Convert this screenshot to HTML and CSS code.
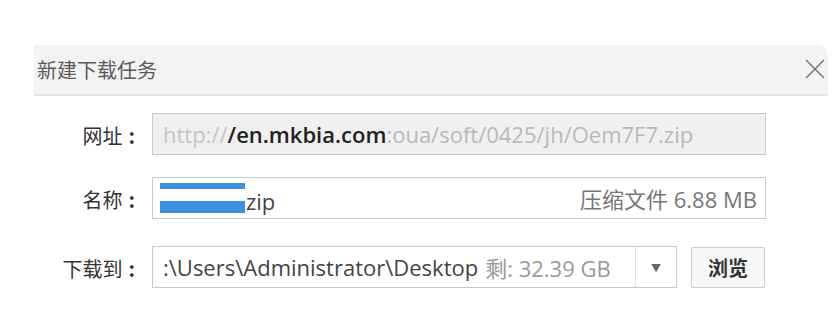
FILE: index.html
```html
<!DOCTYPE html>
<html lang="zh-CN">
<head>
    <meta charset="UTF-8">
    <title>新建下载任务</title>
    <link rel="stylesheet" href="styles.css">
</head>
<body>
    <div class="dialog">
        <div class="titlebar">
            <span class="title">新建下载任务</span>
            <svg class="close" width="22" height="22" viewBox="0 0 22 22">
                <path d="M2 2 L20 20 M20 2 L2 20" stroke="#777" stroke-width="1.5" fill="none"/>
            </svg>
        </div>

        <div class="form">
            <div class="row">
                <label class="label">网址<span class="colon">:</span></label>
                <div class="field field-url">
                    <span class="faint">http://</span><span class="host">/en.mkbia.com</span><span class="faint2">:oua/soft/0425/jh/Oem7F7.zip</span>
                </div>
            </div>

            <div class="row row-name">
                <label class="label">名称<span class="colon">:</span></label>
                <div class="field field-name">
                    <span class="mark"><i class="bar bar-top"></i><i class="bar bar-bottom"></i></span>
                    <span class="name-tail">zip</span>
                    <span class="meta">压缩文件 6.88 MB</span>
                </div>
            </div>

            <div class="row row-path">
                <label class="label">下载到<span class="colon">:</span></label>
                <div class="select">
                    <div class="select-text">:\Users\Administrator\Desktop <span class="free">剩: 32.39 GB</span></div>
                    <div class="select-arrow">&#9660;</div>
                </div>
                <button class="browse">浏览</button>
            </div>
        </div>
    </div>
</body>
</html>
```

FILE: styles.css
```css
* {
    margin: 0;
    padding: 0;
    box-sizing: border-box;
}

body {
    background: #fff;
    font-family: "Open Sans", "Noto Sans CJK SC", sans-serif;
    color: #333;
}

.dialog {
    padding-top: 45px;
    margin-left: 34px;
    width: 794px;
}

/* Barra de titulo */
.titlebar {
    height: 51px;
    background: #f3f3f3;
    border-bottom: 2px solid #e4e4e4;
    border-top-right-radius: 10px;
    display: flex;
    align-items: center;
    justify-content: space-between;
    padding: 0 2px 0 3px;
}

.title {
    font-family: "Noto Sans CJK SC", sans-serif;
    font-size: 20px;
    color: #5a5a5a;
}

.close {
    margin-top: -2px;
}

.form {
    padding-top: 17px;
}

.row {
    display: flex;
    align-items: center;
    height: 42px;
}

.row-name {
    margin-top: 22px;
}

.row-path {
    margin-top: 27px;
}

.label {
    width: 101px;
    text-align: right;
    font-family: "Noto Sans CJK SC", sans-serif;
    font-size: 20px;
    color: #333;
    margin-right: 17px;
    padding-top: 2px;
}

.colon {
    margin-left: 6px;
    font-weight: 700;
}

.field {
    width: 614px;
    height: 42px;
    border: 1px solid #c8c8c8;
    display: flex;
    align-items: center;
    padding: 0 8px 0 10px;
    font-size: 22px;
    white-space: nowrap;
    overflow: hidden;
}

.field-url {
    background: #f0f0f0;
}

.faint {
    color: #c4c4c4;
}

.host {
    color: #222;
    font-weight: 600;
}

.faint2 {
    color: #b8b8b8;
}

.field-name {
    background: #fff;
}

.mark {
    display: flex;
    flex-direction: column;
    justify-content: space-between;
    width: 85px;
    height: 30px;
    margin-left: -3px;
}

.bar {
    display: block;
    background: #3d8fe0;
}

.bar-top {
    height: 6px;
}

.bar-bottom {
    height: 12px;
}

.name-tail {
    color: #444;
    margin-left: 1px;
    padding-top: 6px;
}

.meta {
    margin-left: auto;
    color: #777;
}

.select {
    width: 525px;
    height: 42px;
    border: 1px solid #c8c8c8;
    display: flex;
    font-size: 22px;
}

.select-text {
    flex: 1;
    display: flex;
    align-items: center;
    padding-left: 10px;
    color: #444;
    white-space: nowrap;
    overflow: hidden;
}

.free {
    color: #999;
    margin-left: 7px;
}

.select-arrow {
    width: 41px;
    border-left: 1px solid #e2e2e2;
    display: flex;
    align-items: center;
    justify-content: center;
    font-size: 10px;
    color: #666;
}

.browse {
    margin-left: 14px;
    width: 74px;
    height: 41px;
    border: 1px solid #cfcfcf;
    border-radius: 2px;
    background: #f7f7f7;
    box-shadow: 0 1px 2px rgba(0,0,0,0.12);
    font-family: "Noto Sans CJK SC", sans-serif;
    font-size: 20px;
    font-weight: 700;
    color: #333;
}
```
